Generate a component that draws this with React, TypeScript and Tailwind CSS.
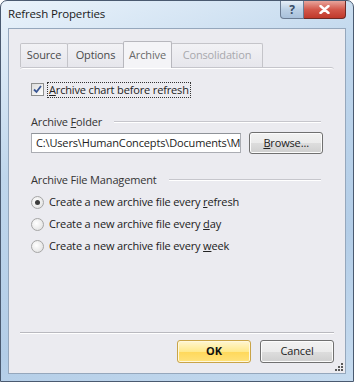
import { useState } from 'react';

const font = { fontFamily: '"Open Sans", "Noto Sans", sans-serif' };

function Checkbox({ checked }: { checked: boolean }) {
  return (
    <div className="w-[13px] h-[13px] border border-[#8e8f8f] bg-[linear-gradient(135deg,#dcdcdc,#ffffff)] flex items-center justify-center shrink-0">
      {checked && (
        <svg width="9" height="9" viewBox="0 0 9 9">
          <path d="M1 4.5 L3.5 7 L8 1" fill="none" stroke="#3a5795" strokeWidth="1.8" />
        </svg>
      )}
    </div>
  );
}

function Radio({ checked }: { checked: boolean }) {
  return (
    <div className="w-[13px] h-[13px] rounded-full border border-[#a6a6a6] bg-[radial-gradient(circle_at_40%_40%,#ffffff,#dcdcdc)] flex items-center justify-center shrink-0">
      {checked && <div className="w-[5px] h-[5px] rounded-full bg-[#3c3c3c]" />}
    </div>
  );
}

function GroupHeading({ children }: { children: React.ReactNode }) {
  return (
    <div className="flex items-center h-[16px] pr-[13px]">
      <span className="text-[#333]">{children}</span>
      <div className="flex-1 ml-[12px] h-[2px] border-t border-[#c6c6cc] border-b-white border-b" />
    </div>
  );
}

export default function App() {
  const [choice, setChoice] = useState('refresh');
  const tabs = [
    { name: 'Source', w: 'w-[48px]' },
    { name: 'Options', w: 'w-[57px]' },
    { name: 'Archive', w: 'w-[49px]' },
    { name: 'Consolidation', w: 'w-[92px]' },
  ];
  const choices = [
    { id: 'refresh', pre: 'Create a new archive file every ', key: 'r', rest: 'efresh' },
    { id: 'day', pre: 'Create a new archive file every ', key: 'd', rest: 'ay' },
    { id: 'week', pre: 'Create a new archive file every ', key: 'w', rest: 'eek' },
  ];

  return (
    <div
      className="w-[354px] h-[382px] rounded-t-[7px] border border-[#4a5a70] bg-[linear-gradient(160deg,#eaf3fb_0%,#bfd6ec_35%,#b3cde7_70%,#c6dbef_100%)] flex flex-col text-[11px] tracking-[-0.15px] overflow-hidden"
      style={font}
    >
      {/* Title bar */}
      <div className="h-[27px] flex items-start shrink-0 relative">
        <span className="ml-[7px] mt-[4px] text-[#1a1a1a] text-[11.5px]">Refresh Properties</span>
        <div className="ml-auto mr-[7px] flex">
          <div className="w-[24px] h-[18px] rounded-bl-[4px] border border-t-0 border-[#6b7c93] bg-[linear-gradient(#e6eef7,#bcd0e5_50%,#a9c1db)] flex items-center justify-center text-[#3a4c66] text-[12px] font-bold leading-none">
            ?
          </div>
          <div className="w-[42px] h-[18px] rounded-br-[4px] border border-t-0 border-l-0 border-[#6e2a25] bg-[linear-gradient(#e8a59c,#d3584b_50%,#c0392b)] flex items-center justify-center">
            <svg width="11" height="9" viewBox="0 0 11 9">
              <path d="M1.5 1 L9.5 8 M9.5 1 L1.5 8" stroke="#fff" strokeWidth="2.4" strokeLinecap="round" />
            </svg>
          </div>
        </div>
      </div>

      {/* Client area */}
      <div className="mx-[7px] mb-[7px] flex-1 border border-[#95a7bc] bg-[#ebebf0] flex flex-col relative">
        {/* Tabs */}
        <div className="mt-[11px] ml-[11px] mr-[10px] flex items-end h-[27px]">
          {tabs.map((t, i) => {
            const active = t.name === 'Archive';
            const disabled = t.name === 'Consolidation';
            return (
              <div
                key={t.name}
                className={`${t.w} flex items-center justify-center border border-b-0 rounded-t-[2px] ${
                  active
                    ? 'h-[27px] bg-[#f4f4f7] border-[#b7b7bd] text-[#6a6a6a] -mb-[1px] relative z-10'
                    : 'h-[24px] bg-[linear-gradient(#f2f2f5,#e6e6ec)] border-[#c4c4c9] ' +
                      (disabled ? 'text-[#a8a8ad]' : 'text-[#4a4a4a]')
                } ${i > 0 ? '-ml-[1px]' : ''}`}
              >
                {t.name}
              </div>
            );
          })}
        </div>

        {/* Tab panel */}
        <div className="mx-[11px] border-t border-[#c5c5cb] rounded-t-[3px] shadow-[inset_0_1px_0_#ffffff] flex flex-col pl-[11px]">
          <div className="mt-[14px] flex items-center gap-[3px] h-[15px]">
            <Checkbox checked />
            <span className="border border-dotted border-[#333] px-[1px] leading-[14px] text-[#222]">
              <u>A</u>rchive chart before refresh
            </span>
          </div>

          <div className="mt-[17px]">
            <GroupHeading>
              Archive <u>F</u>older
            </GroupHeading>
          </div>

          <div className="mt-[2px] flex items-center pr-[11px]">
            <div className="w-[211px] h-[20px] border border-[#abadb3] border-t-[#8f9399] bg-white px-[4px] flex items-center overflow-hidden whitespace-nowrap text-[#222]">
              C:\Users\HumanConcepts\Documents\My Charts
            </div>
            <div className="ml-[8px] w-[74px] h-[22px] rounded-[3px] border border-[#707070] bg-[linear-gradient(#f2f2f2_0%,#ebebeb_50%,#dddddd_51%,#cfcfcf_100%)] flex items-center justify-center text-[#222] shadow-[inset_0_0_0_1px_#fcfcfc]">
              <span>
                <u>B</u>rowse...
              </span>
            </div>
          </div>

          <div className="mt-[18px]">
            <GroupHeading>Archive File Management</GroupHeading>
          </div>

          <div className="mt-[6px] flex flex-col gap-[6px]">
            {choices.map((c) => (
              <label
                key={c.id}
                className="flex items-center gap-[5px] h-[16px] text-[#222]"
                onClick={() => setChoice(c.id)}
              >
                <Radio checked={choice === c.id} />
                <span>
                  {c.pre}
                  <u>{c.key}</u>
                  {c.rest}
                </span>
              </label>
            ))}
          </div>
        </div>

        {/* Footer */}
        <div className="mt-auto mx-[11px] h-[2px] border-t border-[#b9b9bf] border-b border-b-white" />
        <div className="mt-[6px] mb-[10px] mr-[11px] flex justify-end gap-[9px]">
          <div className="w-[74px] h-[23px] rounded-[3px] border border-[#c9a448] bg-[linear-gradient(#fff6d2_0%,#ffe98c_50%,#ffd85a_51%,#ffe27a_100%)] flex items-center justify-center font-bold text-[#111] shadow-[inset_0_0_0_1px_#fff8dd]">
            OK
          </div>
          <div className="w-[74px] h-[23px] rounded-[3px] border border-[#707070] bg-[linear-gradient(#f2f2f2_0%,#ebebeb_50%,#dddddd_51%,#cfcfcf_100%)] flex items-center justify-center text-[#222] shadow-[inset_0_0_0_1px_#fcfcfc]">
            Cancel
          </div>
        </div>

        {/* Size grip */}
        <svg className="absolute right-[1px] bottom-[1px]" width="10" height="10" viewBox="0 0 10 10">
          {[
            [7, 1],
            [7, 4],
            [4, 4],
            [7, 7],
            [4, 7],
            [1, 7],
          ].map(([x, y], i) => (
            <rect key={i} x={x} y={y} width="2" height="2" fill="#5a5a5a" />
          ))}
        </svg>
      </div>
    </div>
  );
}
